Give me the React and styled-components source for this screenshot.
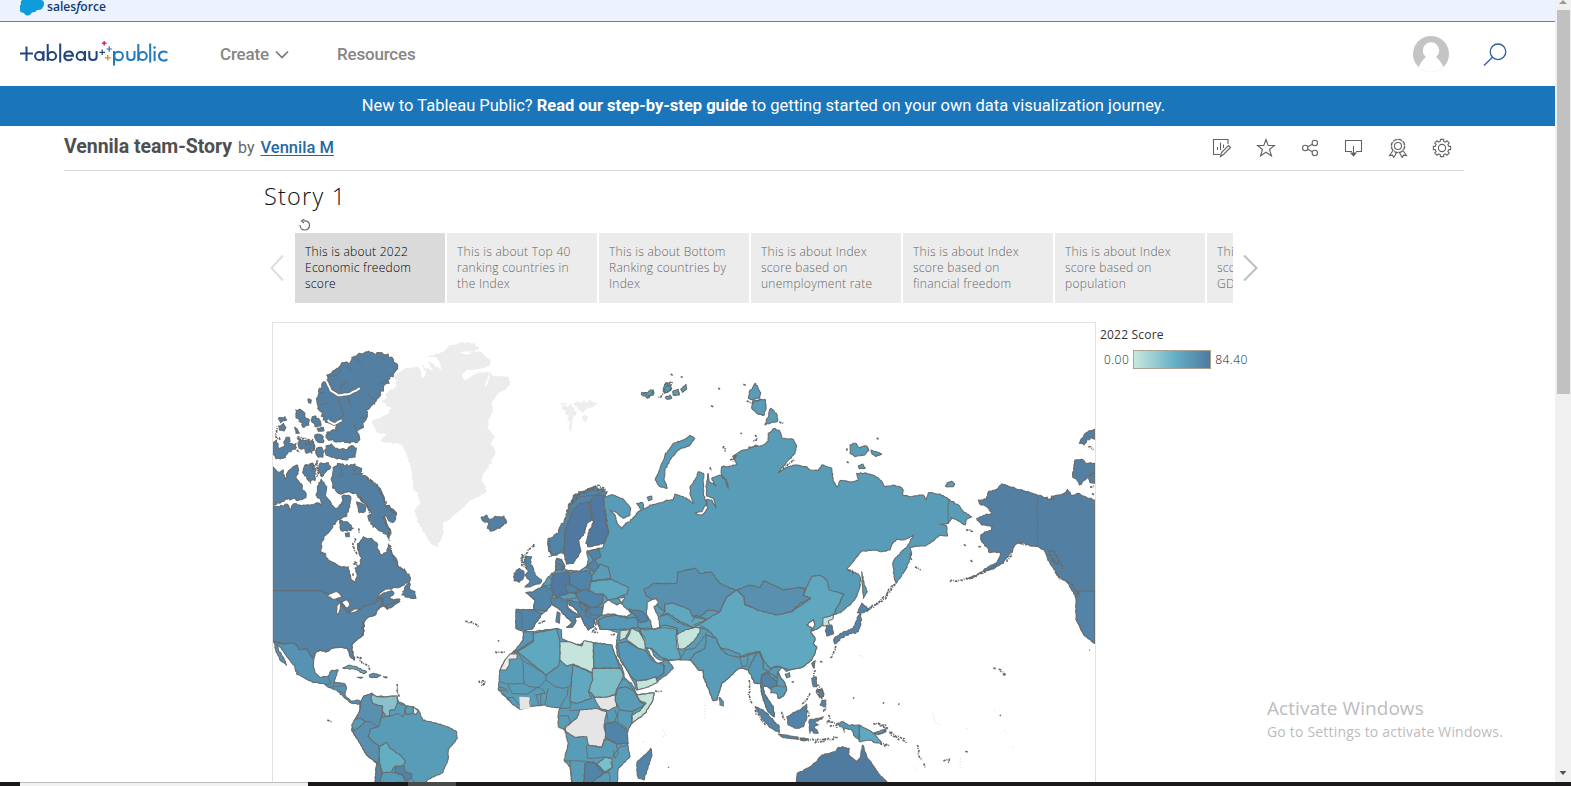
import React from "react";
import styled, { createGlobalStyle } from "styled-components";

const Global = createGlobalStyle`
  * { box-sizing: border-box; }
  html, body { margin: 0; padding: 0; overflow: hidden; background: #fff; }
  body { font-family: Roboto, "Liberation Sans", sans-serif; }
`;

const Screen = styled.div`
  width: 1571px;
  height: 786px;
  display: flex;
  flex-direction: column;
  position: relative;
  overflow: hidden;
`;
const Browser = styled.div`
  display: flex;
  height: 782px;
  flex: none;
`;
const Page = styled.main`
  width: 1555px;
  height: 782px;
  overflow: hidden;
  display: flex;
  flex-direction: column;
`;
const CompanyBar = styled.div`
  height: 22px;
  flex: none;
  background: #ecf3fe;
  border-bottom: 1px solid #2196d6;
  padding-left: 20px;
  svg { display: block; }
`;
const Header = styled.header`
  height: 64px;
  flex: none;
  display: flex;
  align-items: center;
  padding: 0 48px 0 20px;
`;
const NavLink = styled.a`
  display: flex;
  align-items: center;
  gap: 6px;
  margin-left: ${(p) => p.$gap}px;
  width: ${(p) => p.$width}px;
  font-size: 17px;
  font-weight: 500;
  letter-spacing: -0.2px;
  color: #868686;
  white-space: nowrap;
`;
const HeaderTools = styled.div`
  margin-left: auto;
  display: flex;
  align-items: center;
  gap: 34px;
`;
const Banner = styled.div`
  height: 40px;
  flex: none;
  background: #1b75bb;
  color: #fff;
  font-size: 16.5px;
  display: flex;
  justify-content: center;
  align-items: center;
  padding: 0 28px 2px 0;
  white-space: pre;
  b { font-weight: 700; }
`;
const TitleRow = styled.div`
  height: 45px;
  flex: none;
  margin: 0 91px 0 64px;
  border-bottom: 1px solid #d8d8d8;
  display: flex;
  align-items: center;
  padding-right: 12px;
`;
const Title = styled.h1`
  margin: 0 0 4px;
  font-size: 19.5px;
  font-weight: 700;
  letter-spacing: -0.05px;
  color: #4f4f4f;
  white-space: nowrap;
`;
const By = styled.span`
  margin: 0 0 2px 6px;
  font-size: 16px;
  color: #666;
`;
const Author = styled.a`
  margin: 0 0 2px 6px;
  font-size: 16.5px;
  font-weight: 500;
  color: #1f69a6;
  text-decoration: underline;
  text-decoration-thickness: 1px;
  text-underline-offset: 2px;
  white-space: nowrap;
`;
const Actions = styled.div`
  margin-left: auto;
  display: flex;
  gap: 24px;
  svg { display: block; }
`;
const Viz = styled.section`
  font-family: "Open Sans", "Noto Sans", sans-serif;
  margin-left: 264px;
  width: 1010px;
  flex: none;
`;
const StoryTitle = styled.h2`
  margin: 0;
  height: 48px;
  padding-top: 9px;
  font-size: 23.5px;
  line-height: 33px;
  font-weight: 300;
  letter-spacing: 1.2px;
  color: #111;
`;
const ResetRow = styled.div`
  height: 14px;
  padding-left: 34px;
  svg { display: block; }
`;
const Navigator = styled.div`
  display: flex;
  align-items: center;
  height: 70px;
`;
const ArrowSlot = styled.div`
  width: ${(p) => p.$width}px;
  padding-left: ${(p) => p.$inset}px;
  display: flex;
  flex: none;
`;
const Points = styled.div`
  width: 938px;
  display: flex;
  gap: 2px;
  overflow: hidden;
  flex: none;
`;
const Point = styled.div`
  width: 150px;
  height: 70px;
  flex: none;
  padding: 11px 0 0 10px;
  background: ${(p) => (p.$active ? "#dadada" : "#ececec")};
  color: ${(p) => (p.$active ? "#000" : "#666")};
  font-size: 12px;
  font-weight: 300;
  line-height: 16px;
  letter-spacing: 0.27px;
  white-space: pre;
`;
const Board = styled.div`
  display: flex;
  margin: 19px 0 0 8px;
`;
const MapFrame = styled.div`
  width: 824px;
  height: 470px;
  border: 1px solid #e2e2e2;
  flex: none;
  svg { display: block; }
`;
const Legend = styled.div`
  padding: 4px 0 0 4px;
  font-size: 12px;
  letter-spacing: 0.2px;
  color: #333;
`;
const LegendTitle = styled.div`
  line-height: 17px;
`;
const LegendScale = styled.div`
  display: flex;
  align-items: center;
  gap: 4px;
  margin: 6px 0 0 4px;
  color: #222;
  font-weight: 300;
  letter-spacing: 0.45px;
`;
const Ramp = styled.div`
  width: 78px;
  height: 19px;
  margin-top: 1px;
  border: 1px solid #aaa38f;
  background: linear-gradient(90deg, #c8e8df, #64aec6 55%, #5079a1);
`;
const Scrollbar = styled.div`
  width: 16px;
  background: #f0f0f0;
  display: flex;
  flex-direction: column;
  align-items: center;
  svg { display: block; }
`;
const Thumb = styled.div`
  width: 13px;
  height: 384px;
  margin: 6px 0 auto 1px;
  background: #c1c1c1;
`;
const Taskbar = styled.div`
  height: 4px;
  display: flex;
  background: #1b191a;
  padding-left: 20px;
`;
const TaskItem = styled.div`
  width: ${(p) => p.$width}px;
  margin-right: ${(p) => p.$after}px;
  background: ${(p) => p.$color};
  border-top: 1px solid ${(p) => p.$edge};
`;
const Watermark = styled.div`
  position: absolute;
  left: 1267px;
  top: 695px;
  font-family: "Open Sans", "Noto Sans", sans-serif;
  color: #bcbcbc;
  white-space: nowrap;
`;
const WatermarkTitle = styled.div`
  font-size: 19px;
  line-height: 27px;
  letter-spacing: 0.05px;
`;
const WatermarkText = styled.div`
  font-size: 14px;
  line-height: 20px;
  letter-spacing: 0.19px;
`;

/* ---------- map ---------- */

// Each sheet is drawn at three units per pixel from its own origin.
const SHEETS = {
  A: [260, 320],
  B: [260, 540],
  C: [480, 460],
  D: [640, 360],
  E: [640, 560],
  F: [860, 400],
};

const toPoints = (text) => {
  let sheet = SHEETS.A;
  const out = [];
  text.trim().split(/\s+/).forEach((tok) => {
    if (SHEETS[tok]) sheet = SHEETS[tok];
    else {
      const [x, y] = tok.split(",").map(Number);
      out.push([sheet[0] + x / 3, sheet[1] + y / 3]);
    }
  });
  return out;
};

const noise = (a, b) => {
  const v = Math.sin(a * 12.9898 + b * 78.233) * 43758.5453;
  return v - Math.floor(v) - 0.5;
};

const pathOf = (text, rough = 0, closed = true) => {
  const pts = toPoints(text);
  let d = "";
  const n = pts.length;
  for (let i = 0; i < n; i++) {
    const [x, y] = pts[i];
    d += `${i ? "L" : "M"}${x.toFixed(1)} ${y.toFixed(1)}`;
    if (!closed && i === n - 1) break;
    const [u, v] = pts[(i + 1) % n];
    const len = Math.hypot(u - x, v - y);
    if (rough && len < 60 && x > 274 && x < 1093) {
      const steps = Math.floor(len / 1.7);
      for (let k = 1; k < steps; k++) {
        const t = k / steps;
        const px = x + (u - x) * t;
        const py = y + (v - y) * t;
        d += `L${(px + noise(px, py) * rough).toFixed(1)} ${(py + noise(py, px) * rough).toFixed(1)}`;
      }
    }
  }
  return closed ? d + "Z" : d;
};

const CA = "#537fa3";
const US = "#5383a7";
const RU = "#599cb7";
const KZ = "#5990b0";
const CN = "#5fa8bf";
const MID = "#5698b7";
const EU = "#5085a9";
const MX = "#5592b3";
const DEEP = "#5079a1";
const PALE = "#c5e5dc";
const GRAY = "#e5e5e5";
const GL = "#ececec";

// [fill, outline, roughness, stroke]
const LAND = [
  // Arctic Canada
  [CA, "A 200,165 225,150 242,138 250,128 270,130 275,112 298,100 322,96 350,102 366,98 385,108 400,118 413,135 410,150 390,175 380,190 370,205 362,225 345,245 330,262 318,270 322,290 308,310 305,325 290,335 298,350 292,368 270,370 240,366 215,360 198,352 205,335 230,330 228,310 205,308 190,300 188,280 172,265 170,240 178,205 190,185 205,195", 3.2],
  [CA, "A 107,270 118,268 130,275 135,290 148,300 146,316 132,322 118,300 108,288", 2.4],
  [CA, "A 157,290 168,288 180,302 182,318 165,320 156,306", 2.4],
  [CA, "A 55,295 75,290 80,300 62,308", 2],
  [CA, "A 55,318 70,310 78,322 72,333 58,330", 2.4],
  [CA, "A 145,236 154,240 152,250 146,248", 1],
  [CA, "A 104,322 112,328 118,340 108,340", 1],
  [CA, "A 172,325 190,322 192,332 175,334", 1],
  [CA, "A 38,370 50,360 56,385 70,380 78,352 88,352 90,375 108,370 106,388 85,395 70,415 48,416 38,400", 2.6],
  [CA, "A 112,355 135,362 158,358 162,385 155,400 140,400 132,385 118,385", 3.6],
  [CA, "A 165,345 185,345 192,362 180,368 168,360", 2.4],
  [CA, "A 170,385 185,382 192,395 188,412 175,412 168,400", 2.4],
  [CA, "A 198,378 215,372 225,385 255,388 280,378 288,392 285,412 250,418 215,412 198,405", 2.4],
  [CA, "A 38,440 52,455 70,450 75,478 84,455 100,440 113,437 113,455 107,470 120,490 127,510 138,520 132,535 115,542 100,535 82,538 65,545 50,552 38,552", 2.8],
  [CA, "A 135,435 160,432 168,450 166,475 152,490 140,475 128,458", 3],
  [CA, "A 180,430 205,428 212,440 198,455 185,470 175,455", 2],
  [CA, "A 232,432 265,438 285,432 305,445 300,460 325,475 345,490 362,510 372,530 375,548 400,568 410,580 402,605 385,600 375,585 380,610 392,632 388,650 370,640 350,625 332,612 325,595 332,575 322,555 305,545 290,520 265,515 235,520 218,505 214,480 220,450", 3],
  [CA, "A 240,600 250,605 262,605 280,625 272,632 248,634 240,620", 2],
  [CA, "A 256,640 268,638 268,650 258,650", 1],
  [CA, "A 290,545 315,555 315,575 298,578", 1],
  // North American mainland
  [CA, "A 38,558 60,560 80,552 92,568 100,552 130,555 150,556 170,548 182,555 180,535 168,525 172,500 183,478 200,500 198,530 215,555 232,565 245,548 250,525 272,530 270,560 258,590 240,598 228,605 218,622 200,642 185,668 182,690 183,700 B 182,35 195,40 205,60 225,70 245,82 265,80 268,100 275,120 287,128 291,110 285,85 300,75 305,55 298,35 297,10 A 296,700 292,672 310,650 335,655 350,668 355,690 368,706 382,695 385,672 395,695 B 395,40 408,55 412,75 425,85 437,98 448,103 450,122 432,135 410,143 385,146 365,155 352,172 372,158 395,152 402,160 388,170 398,182 420,178 415,186 400,190 380,206 372,198 360,202 350,210 345,225 325,232 312,245 310,285 290,300 275,315 275,330 283,360 272,352 263,325 245,322 215,325 200,335 180,330 165,340 160,360 38,305", 2],
  [US, "B 38,152 180,152 195,160 220,165 262,215 300,206 320,196 346,190 350,176 362,172 368,192 355,205 345,225 325,232 312,245 310,285 290,300 275,315 275,330 283,360 272,352 263,325 245,322 215,325 200,335 180,330 165,340 161,357 148,340 138,326 120,330 105,312 90,310 68,310 38,302", 0.8],
  ["#fff", "B 200,168 215,160 232,155 248,172 232,175 220,178", 1],
  ["#fff", "B 232,195 242,185 240,210 235,225 229,218", 0.8],
  ["#fff", "B 245,185 262,178 270,195 262,205 252,195", 1],
  ["#fff", "B 262,220 285,206 305,206 285,216", 0.6],
  [CA, "B 425,165 440,135 450,130 450,148 465,155 468,175 448,172", 1.8],
  [CA, "B 378,195 395,190 412,183 420,185 400,198 382,208", 1.4],
  // Mexico, Central America and the Caribbean
  [MX, "B 42,305 68,312 90,310 105,312 120,330 138,326 148,340 161,357 160,380 165,398 180,412 205,408 213,392 235,390 230,405 222,428 252,430 259,440 255,465 275,485 290,480 303,485 298,492 275,490 250,470 230,450 205,442 190,430 160,428 110,402 105,382 85,355 62,322 50,312 55,330 72,355 80,376 62,362 48,335", 1],
  ["#62abc1", "B 248,384 265,376 290,380 320,396 312,401 285,388", 1],
  [MX, "B 328,405 340,400 362,406 350,413 330,412", 1],
  [EU, "B 292,412 308,412 303,415", 0],
  [EU, "B 370,410 382,411 378,414", 0],
  // South America
  [RU, "B 302,485 312,468 335,460 345,468 380,470 410,468 415,485 440,498 475,510 488,540 530,550 562,560 590,575 592,595 565,630 565,655 548,698 515,712 495,728 345,728 350,670 320,645 300,610 275,570 290,530 300,510", 1],
  [KZ, "B 302,485 312,468 335,460 338,490 370,498 365,530 355,560 330,568 325,590 345,610 355,615 360,645 352,670 320,645 300,610 275,570 290,530 300,510", 0.6],
  ["#89c2cb", "B 338,463 350,470 380,470 412,468 412,490 405,508 388,512 390,528 378,530 368,515 368,498 338,490 332,475", 0.8],
  [RU, "B 285,538 302,534 315,545 300,560 282,572 275,555", 0.5],
  ["#62afc2", "B 358,620 380,607 390,625 420,645 436,662 430,680 405,678 395,695 368,698 358,670", 0.6],
  [EU, "B 345,728 350,670 360,672 364,700 360,728", 0.5],
  [EU, "B 405,682 430,676 436,695 455,702 455,715 440,722 428,705 405,697", 0.6],
  [RU, "B 434,508 442,498 460,500 460,520 440,524", 0],
  [GRAY, "B 460,500 475,512 468,524 460,520", 0],
  // Greenland
  [GL, "A 575,75 600,68 640,70 655,80 652,90 620,95 665,95 690,120 690,135 665,145 620,150 605,165 615,180 645,160 690,155 700,170 720,168 745,170 750,190 740,205 715,220 695,250 700,275 685,300 685,325 705,350 690,370 708,395 695,425 675,455 665,480 680,510 675,520 625,545 600,570 570,598 548,610 550,640 530,682 512,670 495,640 475,610 463,570 480,545 470,520 458,500 455,455 440,400 425,375 390,368 360,362 380,345 350,335 335,305 380,285 395,265 365,245 380,235 375,220 410,200 405,165 435,145 475,138 490,175 500,155 485,135 520,155 505,125 545,150 530,110 500,110 540,100", 2, "none"],
  ["#fff", "A 607,170 640,152 672,150 640,165 615,180", 1, "none"],
  ["#fff", "A 672,205 692,152 684,190", 1, "none"],
  ["#fff", "A 597,98 618,94 640,101 615,103", 1, "none"],
  ["#fff", "A 455,515 475,518 472,524 458,524", 1, "none"],
  // Iceland
  [CA, "A 665,590 680,585 692,598 712,590 732,588 740,606 720,625 700,632 682,625 686,608 668,602", 2.6],
  // Eurasia
  [RU, "C 370,110 400,105 430,118 452,145 450,165 430,175 405,155 390,150 405,165 412,190 425,205 437,190 450,185 470,160 485,150 470,130 488,128 490,148 510,135 545,128 560,120 580,120 583,110 D 105,402 130,410 160,430 150,400 150,380 165,360 175,335 190,340 191,375 190,400 200,430 185,455 165,459 185,466 203,445 200,418 215,420 228,444 220,415 200,408 199,375 204,340 208,365 228,378 215,355 240,345 255,358 265,385 260,360 245,345 245,320 275,318 290,312 278,290 300,275 340,260 370,255 385,242 385,220 405,205 420,215 425,235 460,238 470,260 465,280 440,305 415,338 445,320 465,315 500,320 510,330 535,332 545,315 575,325 580,365 592,382 600,362 640,365 655,360 650,340 680,340 F 45,228 60,240 75,260 100,255 120,260 130,270 128,285 150,290 190,285 198,300 205,278 240,282 265,297 300,320 310,335 335,350 320,358 315,375 300,365 275,352 265,370 240,372 260,378 262,408 240,405 210,430 195,438 170,438 150,442 155,460 145,490 135,512 108,550 102,530 98,490 105,475 130,450 148,430 160,405 145,415 130,420 110,418 95,435 90,450 65,455 50,450 5,453 D 640,605 620,628 655,642 E 660,50 660,80 650,110 630,135 605,155 580,165 560,178 548,195 530,208 515,212 525,195 520,178 500,195 515,203 512,218 525,235 520,250 530,260 525,280 515,300 490,320 450,330 440,335 430,325 415,322 412,335 435,370 440,390 430,408 415,415 410,400 390,385 378,378 370,380 372,400 385,420 400,440 403,470 385,455 370,420 365,400 360,370 345,370 335,350 325,330 300,325 290,330 270,350 245,370 238,395 230,420 220,422 205,385 190,350 190,330 175,330 165,315 150,300 120,300 85,300 C 540,600 525,590 510,565 500,565 515,590 530,610 550,605 555,590 580,625 560,645 530,665 470,690 460,665 440,630 415,590 408,560 415,520 405,515 380,508 360,508 355,495 345,475 340,500 325,510 310,485 300,465 280,440 260,430 265,445 300,470 285,472 288,482 278,500 260,502 278,488 255,465 235,445 215,432 200,452 185,462 170,485 155,508 125,512 108,505 110,450 160,450 165,420 138,398 165,395 185,380 205,350 225,335 230,295 245,300 255,330 300,333 320,320 325,300 320,275 345,268 370,262 384,222 378,170", 1.1],
  [EU, "C 205,235 230,220 250,190 265,140 285,105 320,90 350,80 382,95 370,120 378,170 385,220 370,250 330,260 318,250 325,220 342,185 330,178 320,190 310,225 295,240 302,275 280,310 260,312 250,280 240,278 215,287 205,265", 2.4],
  [DEEP, "C 252,280 255,210 280,150 300,130 330,125 335,180 320,190 310,225 295,240 302,275 280,310 260,312", 0.4],
  [DEEP, "C 330,125 345,105 370,105 372,140 378,180 385,220 370,250 330,260 318,250 325,220 342,185 335,160", 0.6],
  [EU, "C 228,300 245,298 255,320 245,332 228,332", 2],
  [DEEP, "C 218,342 265,335 272,372 258,382 265,400 228,412 212,385 215,360", 0.8],
  [EU, "C 270,338 330,332 335,352 330,385 300,392 268,370", 0.8],
  [EU, "C 160,395 190,378 215,388 218,405 215,432 200,452 160,450 165,420 138,398", 1],
  [EU, "C 108,448 160,450 185,462 170,485 155,508 125,512 108,505", 1],
  [EU, "C 212,415 240,412 262,425 262,445 300,470 285,472 288,482 278,500 260,502 278,488 255,465 235,445 215,432", 1],
  [EU, "C 255,375 275,375 295,388 285,400 262,395", 0.5],
  [EU, "C 285,400 315,388 350,402 370,405 365,432 340,445 320,435 300,425", 0.8],
  [EU, "C 262,420 285,425 310,430 330,445 370,440 365,465 345,475 340,500 325,510 310,485 300,465 280,440", 1.5],
  [EU, "C 322,272 358,268 362,290 345,300 355,315 345,335 318,320 340,300", 1.2],
  ["#5b9db9", "C 335,348 360,312 385,322 392,355 335,362", 0.8],
  [CN, "C 332,365 392,358 410,365 445,382 442,400 410,415 385,420 370,402 350,402 328,392", 0.8],
  ["#fff", "C 365,465 372,430 385,420 410,435 425,428 412,415 435,412 425,432 455,460 440,470 395,462", 1],
  [MID, "C 355,480 375,470 410,466 440,474 472,472 475,502 440,508 405,508 380,508 360,508", 1],
  [EU, "C 445,448 490,455 505,480 480,488 470,470", 1.2],
  [KZ, "E 12,90 40,70 110,70 112,38 165,25 180,40 212,35 240,70 288,92 260,112 240,155 205,150 175,172 150,165 100,130 75,132 75,155 55,140 45,120 20,110", 1.2],
  [CN, "E 75,155 75,132 100,130 150,150 158,170 200,178 165,205 120,185 85,160 60,170", 0.8],
  [CN, "E 0,205 35,205 75,195 112,205 115,265 122,298 85,300 60,290 35,265 15,262", 0.7],
  ["#fff", "E 20,125 50,115 55,130 42,140 55,170 60,205 38,208 30,180 20,165", 1.2],
  [PALE, "E 108,225 135,210 160,203 180,195 180,215 160,245 135,265 112,268", 0.8],
  [CN, "E 165,200 240,155 260,112 290,90 312,110 315,135 410,162 455,155 512,115 490,105 500,80 515,50 540,45 560,60 568,90 612,102 592,140 585,160 560,178 548,195 530,208 515,212 525,195 520,178 500,195 515,203 512,218 525,235 520,250 530,260 525,280 515,300 490,320 450,330 410,318 390,325 370,300 360,275 325,280 300,290 240,262 228,235 205,210", 0.8],
  [KZ, "E 290,90 330,75 360,82 370,62 400,75 430,90 475,82 495,85 490,105 512,115 480,130 455,155 410,165 350,150 315,132 312,110", 0.9],
  [RU, "E 150,300 165,280 195,265 200,225 228,235 240,262 300,292 360,275 345,300 325,330 300,325 290,330 270,350 245,370 238,395 230,420 220,422 205,385 190,350 190,330 175,330 165,315", 0.9],
  [RU, "E 240,265 265,268 300,282 300,292 265,285", 0.6],
  [MID, "E 325,330 335,305 355,275 368,300 370,325 385,335 365,345 362,370 345,370 335,350", 0.8],
  [EU, "E 365,345 385,340 395,355 412,365 410,378 392,385 378,378 370,380 372,400 385,420 400,440 403,470 385,455 370,420 365,400", 1],
  [RU, "E 385,335 400,322 425,322 412,340 435,370 440,390 430,408 415,415 410,400 392,398 395,382 412,378 412,355", 0.8],
  [PALE, "E 548,175 580,165 580,175 565,185 570,195 550,198", 0.8],
  [DEEP, "E 560,198 575,195 580,222 560,228 556,212", 0.8],
  // Japan, Taiwan, Sakhalin
  [EU, "E 660,155 665,180 655,215 620,225 600,235 585,252 583,235 610,215 640,205 652,180", 2],
  [EU, "E 665,130 690,148 672,158 652,158", 1.2],
  [RU, "E 665,35 672,70 682,95 670,115 668,80", 1],
  [EU, "E 515,310 526,302 522,325", 0.8],
  [RU, "E 436,343 448,338 450,350 440,353", 0.5],
  // South-east Asia
  [EU, "E 345,440 370,450 400,480 418,500 418,518 395,505 370,480", 1.2],
  [EU, "E 440,470 455,462 480,450 500,432 500,475 490,500 465,505 445,495", 1.2],
  [EU, "E 415,522 440,525 475,532 470,537 430,533", 0.8],
  [EU, "E 480,534 505,536 500,541 482,540", 1.5],
  [EU, "E 508,480 530,475 550,470 545,478 522,485 535,495 522,500 535,520 522,520 515,505 510,520 508,500", 1.3],
  [EU, "E 515,355 528,350 530,380 520,380", 1.4],
  [EU, "E 545,422 558,420 555,440 540,435", 1.4],
  [EU, "E 530,390 545,385 550,410 538,412", 2.5],
  [MID, "E 590,490 610,485 625,495 658,495 658,540 645,530 635,510 615,505 600,500", 1.2],
  [CN, "E 658,495 695,515 710,530 725,550 705,548 690,540 658,545", 1],
  [MID, "E 700,520 735,508 738,515 715,524", 0.8],
  [RU, "E 238,412 250,425 250,438 240,435", 0.8],
  // Australia
  ["#507ba0", "E 468,668 472,640 510,620 530,605 545,585 585,575 595,562 628,565 625,585 650,605 662,590 668,555 680,590 695,610 715,640 742,668", 1],
  // Arabia
  [PALE, "C 420,512 450,508 435,535 418,542", 0.5],
  [PALE, "C 440,538 455,505 478,515 495,545 495,572 475,565 455,550", 0.6],
  [MID, "C 412,550 440,545 475,565 498,572 515,600 535,610 550,612 552,640 530,655 470,662 458,655 440,630 420,595", 0.6],
  [PALE, "C 468,662 500,660 528,650 532,668 500,682 472,690", 0.8],
  // Africa
  [RU, "C 130,515 160,515 230,505 245,510 245,535 265,545 300,555 315,545 340,548 395,555 405,585 425,620 435,655 455,670 470,705 522,698 518,722 495,760 455,790 440,820 445,870 450,890 415,925 412,968 275,968 270,920 252,900 265,850 255,812 235,800 235,765 240,745 210,740 190,735 150,740 120,748 95,730 70,705 55,690 60,630 75,600 110,575 130,540", 0.9],
  [MID, "C 130,515 160,515 160,540 115,570 92,582 110,565 130,540", 0.5],
  [CN, "C 160,520 230,506 240,545 240,600 235,618 198,645 112,575 160,545", 0.5],
  [PALE, "C 240,545 265,545 305,558 312,542 340,548 342,640 280,612 260,618 240,600", 0.6],
  [RU, "C 340,548 395,555 405,585 420,625 342,625", 0.6],
  ["#7dbdc8", "C 338,625 422,625 430,650 415,680 405,705 375,712 345,712 325,690 335,660", 0.7],
  [GRAY, "C 340,712 375,712 405,705 410,740 385,752 360,745", 0.6],
  [GRAY, "C 300,750 345,745 380,755 372,800 378,825 365,862 325,855 320,830 285,832 258,815 255,800 290,775", 0.7],
  [GL, "C 60,630 75,600 90,582 112,581 111,596 88,598 88,615 78,630", 0],
  [GRAY, "C 118,710 150,712 152,745 120,748", 0, "none"],
  [CN, "C 275,645 280,615 335,638 338,660 325,695 335,715 290,730 270,725", 0.6],
  [EU, "C 375,790 405,785 440,810 445,850 410,852 378,835", 0.6],
  [RU, "C 412,685 435,680 460,690 480,725 495,735 455,755 420,750 405,720", 0.6],
  [PALE, "C 470,705 522,698 518,722 495,760 455,790 455,765 480,752 498,730 478,720", 0.6],
  ["#78bfca", "C 350,912 375,892 395,895 398,920 375,935", 0.6],
  [EU, "C 315,910 340,905 372,940 350,955 335,968 312,968", 0.6],
  [EU, "C 472,905 500,880 512,865 516,885 492,960 475,955 470,930", 1],
  // Britain, Ireland, Sardinia
  [EU, "C 135,290 155,290 150,310 160,325 165,345 185,360 178,372 155,378 135,382 150,365 135,345 145,335 135,315", 1.6],
  [DEEP, "C 102,340 118,325 132,335 130,355 118,367 102,362", 1.5],
  [EU, "C 232,455 240,460 238,490 228,485", 0.6],
  // Russian Arctic
  [RU, "D 46,360 60,325 75,285 100,250 130,240 150,226 164,235 150,255 115,270 90,300 75,330 72,360 82,385 60,380", 1.2],
  [RU, "D 328,95 347,70 362,98 360,115 340,118 325,115", 1.6],
  [RU, "D 338,122 375,118 378,140 372,166 350,160 335,145", 1.6],
  [RU, "D 375,195 392,145 412,165 412,185 392,188", 1.2],
  [RU, "D 630,255 648,250 655,262 680,258 686,272 672,286 645,290 630,280", 1.6],
  [RU, "D 693,270 725,283 708,290 697,283", 1],
  [RU, "D 655,318 668,312 676,325 658,326", 1],
  [RU, "D 22,412 35,408 36,418 26,422", 0.6],
  [RU, "D 98,95 115,88 118,105 100,106", 1],
  [RU, "D 122,88 138,73 140,88 128,97", 1],
  [RU, "D 70,85 80,68 88,70 95,85 80,98 70,95", 2.6],
  [RU, "D 5,97 18,98 30,90 40,90 42,100 22,115 10,108", 2.6],
  [RU, "D 76,112 90,105 95,115 80,118", 1.6],
  [RU, "F 256,258 262,248 275,244 284,252 280,260 262,261", 0.6],
  // Alaska and the Pacific coast
  [CA, "F 355,300 378,298 385,275 410,268 425,252 450,260 465,265 500,275 532,285 545,288 568,300 575,288 600,285 615,278 622,268 635,288 655,280 670,288 704,300 704,730 690,718 672,705 660,680 648,658 650,600 640,575 620,545 595,530 570,490 555,455 535,440 510,438 490,428 468,432 450,460 430,490 395,508 365,515 345,530 320,538 350,525 380,505 410,488 422,460 405,455 390,458 380,440 365,425 362,405 375,395 395,390 398,378 365,375 350,355 375,345 398,340 380,320 358,310", 1.4],
  [US, "F 704,573 655,573 648,600 648,658 660,680 672,705 704,730", 0.8],
  [CA, "F 658,130 672,105 690,92 704,88 704,118 690,112 672,135", 2],
  [CA, "F 645,180 665,178 675,188 704,190 704,215 685,230 675,240 658,255 650,238 638,232", 1.6],
  [CA, "F 685,235 704,215 704,250 690,248", 1],
];

const BORDERS = [
  "F 532,285 532,438", "F 265,297 265,372", "E 658,495 658,540",
  "C 252,902 300,903 325,905 350,912", "C 270,903 275,968", "C 312,968 315,910", "C 320,855 322,895 350,895 370,890 395,895 420,860 445,855",
  "C 325,855 365,862 372,842 385,838 405,850", "C 378,940 398,920 390,905", "C 350,955 372,940 388,935 390,968",
  "C 128,600 132,670 80,672 60,665", "C 132,670 150,680 175,682 198,660 198,645", "C 130,602 200,645", "C 112,575 128,600",
  "C 198,660 225,680 250,685 275,678 275,645", "C 205,685 195,735", "C 265,685 262,705 240,745", "C 275,725 270,745 240,745", "C 85,675 95,700 140,703 160,690 175,682 190,690 195,700 165,705",
  "C 150,712 150,740", "C 170,705 175,738", "C 182,700 182,735", "C 70,700 80,712 100,712 118,735", "C 55,680 80,688 85,700", "C 60,690 78,692", "C 80,712 95,728",
  "C 235,768 265,768 272,790 250,808", "C 268,752 300,750", "C 380,758 385,790 405,785 410,765 405,750", "C 415,752 412,785 440,805", "C 458,755 455,790", "C 425,658 440,660 465,698 475,705",
  "C 408,850 415,880 405,895 400,870", "C 125,460 127,505", "C 110,455 125,460",
  "C 190,378 212,375 216,360 205,350", "C 218,405 235,412", "C 300,430 305,450 320,450 318,470 335,475", "C 325,445 330,465 368,465", "C 262,400 290,400 288,415 255,418",
  "C 205,290 240,278 252,265 255,210", "C 265,165 275,130 300,110 345,105 370,95",
  "C 475,502 500,510 540,502 590,508 592,540 595,568", "C 475,502 482,520 498,535", "C 530,655 550,640 555,615",
  "E 112,205 108,225", "E 122,298 135,270 165,265 185,240 205,210 180,195", "E 75,160 110,185 160,205", "E 155,185 170,165 200,180 160,195",
  "E 300,292 305,320 320,318 325,285", "E 585,160 592,140 612,102", "E 475,82 495,85", "E 395,355 412,352 412,335", "E 412,378 435,380",
  "B 355,560 330,545 315,545", "B 412,490 440,498 430,530 415,520 390,528", "B 365,530 390,528", "B 455,715 465,728", "B 368,698 362,715", "B 395,695 430,708 435,728",
  "B 205,408 212,430 195,435", "B 222,430 222,440 205,442", "B 225,440 255,435", "B 240,452 255,465", "B 303,485 300,510", "B 345,190 368,172 370,195",
  "A 232,230 245,265 252,285 235,300", "A 250,190 235,205", "A 262,230 272,255", "A 205,170 230,165 245,150", "A 290,115 305,130", "A 260,140 280,155", "A 360,110 375,120", "A 388,178 355,192", "A 345,240 325,225", "A 320,290 298,295", "A 175,215 195,220", "A 180,255 200,250", "A 285,330 285,310",
  "A 240,440 248,465 232,470", "A 290,438 280,465 310,460", "A 205,208 225,212", "A 240,208 250,190 262,185", "A 85,555 92,580", "A 275,440 285,455",
];

// Sounds that cut into the Arctic islands
const SOUNDS = ["A 200,185 212,212 235,226 270,221 300,205", "A 203,300 222,312 245,300"];

// Runs of small islets: fragments of dotted coastline
const ISLETS = [
  "A 150,430 158,450 172,420 172,470", "A 200,335 215,345", "A 112,350 160,365 162,395", "A 60,360 48,350 50,320", "A 320,475 345,490 370,530 378,560 408,580", "A 300,530 325,560 330,590", "A 110,390 118,398", "A 135,375 150,370 148,395",
  "A 370,590 388,630 388,665", "A 285,655 280,685", "A 296,625 294,640", "B 282,20 290,45", "B 283,65 290,75 283,72 292,68", "B 280,100 278,110", "B 388,15 395,40 412,75 440,98", "B 312,245 305,260 310,285",
  "B 290,350 305,352 300,365 320,375 330,390", "B 412,432 410,455 418,470", "B 202,540 215,545", "B 616,244 642,252 658,262", "B 706,335 738,338", "B 713,302 718,303", "B 656,422 672,432 662,435", "B 822,12 808,30 790,45 785,75 800,85", "B 785,42 795,60 790,70 800,50",
  "C 265,135 285,105 325,88 350,76 380,92", "C 275,130 300,102 340,90 375,90", "C 208,240 208,270 222,285", "C 340,478 350,490 342,500 352,508 335,515 355,518", "C 128,290 125,305 132,318", "C 160,255 162,262", "C 175,490 198,482", "C 405,522 392,524", "C 525,692 545,693", "C 5,662 16,668 8,676", "C 235,310 250,320 245,330", "C 300,425 320,440 315,460",
  "D 75,75 95,65 90,90 65,105 55,112", "D 70,92 78,80 92,78", "D 10,100 30,108 42,94", "D 92,42 98,46", "D 122,50 128,52", "D 310,73 318,76", "D 235,84 240,88", "D 213,137 220,140", "D 302,218 305,222", "D 345,225 352,240 340,245", "D 252,258 255,275", "D 270,300 290,285 280,305", "D 325,262 355,255", "D 418,185 430,190", "D 620,265 622,275", "D 712,236 716,237", "D 620,305 626,308", "D 430,328 445,312 462,298", "D 210,322 215,332", "D 320,125 335,130 360,118", "D 625,630 640,632 636,645",
  "E 765,72 750,95 730,118 710,132 690,146", "E 588,258 580,280 568,295", "E 540,305 550,308", "E 328,360 326,400 338,432", "E 345,450 365,480 378,498", "E 510,400 495,425 485,435", "E 530,375 550,400 545,415 530,400 540,390", "E 565,465 570,485 560,490", "E 470,538 520,540 560,540 595,532", "E 525,550 545,545 558,535", "E 570,500 590,495 590,505", "E 560,485 585,490", "E 700,490 730,495 745,505 735,515", "E 750,515 765,530 778,540", "E 610,505 612,520", "E 455,365 462,366", "E 525,330 520,350", "E 640,412 642,416", "E 85,620 86,623", "E 775,432 778,433", "E 735,555 750,558", "E 605,560 612,562", "E 500,450 508,470", "E 425,455 435,480", "E 550,455 558,440",
  "F 20,630 45,615 75,590 92,565 105,550", "F 270,545 300,540 325,537 350,525 380,512 405,495", "F 318,390 342,395", "F 312,433 317,438", "F 332,480 337,486", "F 165,500 182,510", "F 150,460 155,480", "F 355,440 365,440", "F 440,485 450,470 455,450", "F 480,430 500,435", "F 565,455 580,450 590,470 605,495 608,510", "F 585,515 600,540", "F 620,545 640,560 655,575 660,590", "F 565,465 595,495 575,480", "F 400,804 408,806", "F 416,808 430,816", "F 55,970 78,985 70,998 45,1000", "F 92,995 108,1010 125,1015 140,1030", "F 60,1030 82,1035", "F 172,1035 178,1070 185,1080", "F 192,1090 196,1102", "F 250,1082 268,1078 262,1088", "F 316,1054 323,1056", "F 115,912 118,913", "F 68,908 73,910", "F 420,945 422,948", "F 685,140 700,150", "F 690,260 702,258", "F 696,280 703,285", "F 688,750 690,751", "F 50,114 54,116", "F 560,290 572,298 585,290",
];

const FAINT = ["F 218,938 225,965 243,975", "F 320,985 325,990", "F 402,930 408,934", "F 432,990 438,1000", "F 458,1040 462,1041", "F 302,1075 300,1108", "F 162,1100 175,1110", "E 195,435 195,480", "E 70,510 80,530", "E 10,545 12,546", "E 125,618 126,619", "E 660,285 662,290", "F 5,768 8,770", "C 488,845 492,848", "C 550,830 553,828"];

const SVALBARD = [
  "M562 406l4-1 1 2 3-2 1-2 1 4 3 1-1 3 3 0-1 4-3 2-1 8-1 7-2-3 1-7-3-3 2-3-4-2 1-3-4-2z",
  "M573 404l4-3 4 2 3-3 3 3 3-4 2 3 6 1-5 4-7 2-3 4-4-3-2-3z",
  "M582 416l3-1 3 2-2 5-3-1z",
  "M561 403l6 0 0 1-6 1z",
];

const WorldMap = () => (
  <svg width="822" height="468" viewBox="273 323 822 468">
    {LAND.map(([fill, text, rough, stroke], i) => (
      <path key={i} d={pathOf(text, rough)} fill={fill} stroke={stroke || "#676b6c"} strokeWidth={1.1} strokeLinejoin="round" />
    ))}
    {SVALBARD.map((d) => <path key={d} d={d} fill="#ededed" />)}
    <g fill="none" stroke="#676b6c" strokeWidth="0.95">
      {BORDERS.map((t) => <path key={t} d={pathOf(t, 0.8, false)} />)}
    </g>
    <g fill="none" strokeLinejoin="round">
      {SOUNDS.map((t) => (
        <g key={t}>
          <path d={pathOf(t, 1.2, false)} stroke="#676b6c" strokeWidth="3.6" />
          <path d={pathOf(t, 0.8, false)} stroke="#fff" strokeWidth="2" />
        </g>
      ))}
    </g>
    <g fill="none" stroke="#646868" strokeWidth="1.6" strokeDasharray="2.5 1 1 1.2">
      {ISLETS.map((t) => <path key={t} d={pathOf(t, 2.4, false)} />)}
    </g>
    <g fill="none" stroke="#c4c4c4" strokeWidth="0.7" strokeDasharray="1 2">
      {FAINT.map((t) => <path key={t} d={pathOf(t, 1, false)} />)}
    </g>
    <circle cx="1004.3" cy="674.3" r="1.5" fill="#537485" />
  </svg>
);

/* ---------- logos and icons ---------- */

const SalesforceLogo = () => (
  <svg width="90" height="21" viewBox="0 0 90 21">
    <path d="M1 4C0 1 2-3 6-3c2-3 6-2 7 0 4-2 7 0 8 2 3 0 4 4 2 7-1 3-4 3-6 3-1 2-4 3-5 2-1 4-6 5-8 1-2 0-5-1-4-4-2-1-1-4 1-4z" transform="translate(0 1)" fill="#0d9dda" />
    <text x="27" y="10.5" fontFamily="Open Sans, sans-serif" fontSize="12.2" fontWeight="600" fill="#123a73" textLength="59" lengthAdjust="spacingAndGlyphs">sales<tspan fontStyle="italic">f</tspan>orce</text>
  </svg>
);

const TableauLogo = () => (
  <svg width="150" height="30" viewBox="0 0 150 30">
    <g fill="none" strokeWidth="2">
      <g stroke="#1f447e">
        <path d="M0 14.5H13M6.5 7.5V22" />
        <circle cx="19.2" cy="17" r="4.100" /><path d="M23.500 12V22" />
        <path d="M27.700 5V22" /><circle cx="32" cy="17" r="4.100" />
        <path d="M40.200 4.500V23.500" />
        <path d="M44.300 16.700H53C52.500 10.800 44.500 11 44.300 17c0 4.700 5.600 5.500 8 2.600" />
        <circle cx="60.700" cy="17" r="4.100" /><path d="M65 12V22" />
        <path d="M69.300 12V18c0 4 7.300 4 7.300 0V12" />
      </g>
      <g stroke="#2079bd">
        <path d="M94 12V26.500" /><circle cx="98.600" cy="17" r="4.300" />
        <path d="M107.300 12V18c0 4 7.200 4 7.200 0V12" />
        <path d="M118.300 5V22" /><circle cx="122.700" cy="17" r="4.100" />
        <path d="M130.200 4.500V23.500M134.600 12V22" />
        <path d="M147.300 13.700c-3-2.600-8.300-1-8.300 3.300s5.300 6 8.300 3.300" />
      </g>
      <circle cx="134.600" cy="8.500" r="1.200" fill="#2079bd" />
      <path d="M79.500 13.300h5.500M82.200 10.500v5.500" stroke="#1f447e" strokeWidth="1.200" />
      <path d="M82 4.300h4.500M84.200 2v4.500" stroke="#d62f4e" strokeWidth="1.500" />
      <path d="M86.500 10h5.500M89.200 7.200v5.500" stroke="#2079bd" strokeWidth="1.200" />
      <path d="M85 18.800h5.500M87.700 16v5.500" stroke="#ee8a45" strokeWidth="1.500" />
    </g>
  </svg>
);

const Avatar = () => (
  <svg width="36" height="36" viewBox="0 0 36 36">
    <defs><clipPath id="face"><circle cx="18" cy="18" r="18" /></clipPath></defs>
    <g clipPath="url(#face)">
      <rect width="36" height="36" fill="#c4c4c4" />
      <circle cx="18" cy="14.500" r="8.200" fill="#fff" />
      <path d="M4 35C7 27 11 22 13.500 21h9C26 23 29 27 32 35v2H4z" fill="#fff" />
    </g>
  </svg>
);

const Search = () => (
  <svg width="24" height="24" viewBox="0 0 24 24" fill="none" stroke="#2b5ba6" strokeWidth="1.300">
    <circle cx="15" cy="9.800" r="7.800" /><path d="M9.500 15.300L1 23.500" />
  </svg>
);

const Icon = ({ children }) => (
  <svg width="20" height="20" viewBox="0 0 20 20" fill="none" stroke="#636363" strokeWidth="1.100">{children}</svg>
);

const gearPath = (() => {
  const pts = [];
  for (let i = 0; i < 8; i++) {
    [[-0.24, 6.9], [-0.19, 8.8], [0.19, 8.8], [0.24, 6.9]].forEach(([a, r]) => {
      const t = (i * Math.PI) / 4 + a;
      pts.push(`${(10 + r * Math.sin(t)).toFixed(2)} ${(10 - r * Math.cos(t)).toFixed(2)}`);
    });
  }
  return `M${pts.join("L")}Z`;
})();

const Toolbar = () => (
  <Actions>
    <Icon><path d="M8 16.500H1.500V1.500H16V6M5.500 12V9M8.500 12V4.500M11.500 10V6.500" /><path d="M8.500 18.500l1-4 7-7 2 2-7 7zM9 17.500l-1 1" /></Icon>
    <Icon><path d="M10 1.500l2.200 6h6.300l-5 4 2 6.500L10 14.200 4.500 18l2-6.500-5-4h6.300z" /></Icon>
    <Icon><circle cx="5.200" cy="10" r="2.700" /><circle cx="14.800" cy="5" r="2.700" /><circle cx="14.800" cy="15" r="2.700" /><path d="M7.600 8.800l4.900-2.600M7.600 11.200l4.900 2.600" /></Icon>
    <Icon><path d="M8 13.500H1.500V2.500h16v11H12M9.500 8v9" /><path d="M7 15h5l-2.500 3z" fill="#555" /></Icon>
    <Icon><circle cx="10" cy="8" r="3.500" /><circle cx="10" cy="8" r="6.800" strokeDasharray="4 1.340" /><circle cx="10" cy="8" r="6.400" strokeWidth=".7" /><path d="M5 12.500l-3.500 5 3-.3 1.200 2.300 3-5M15 12.500l3.500 5-3-.3-1.200 2.300-3-5" /></Icon>
    <Icon><path d={gearPath} strokeLinejoin="round" /><circle cx="10" cy="10" r="3.600" /></Icon>
  </Actions>
);

const POINTS = [
  "This is about 2022\nEconomic freedom\nscore",
  "This is about Top 40\nranking countries in\nthe Index",
  "This is about Bottom\nRanking countries by\nIndex",
  "This is about Index\nscore based on\nunemployment rate",
  "This is about Index\nscore based on\nfinancial freedom",
  "This is about Index\nscore based on\npopulation",
  "This is about Index\nscore based on\nGDP",
];

export default function App() {
  return (
    <Screen>
      <Global />
      <Browser>
        <Page>
          <CompanyBar><SalesforceLogo /></CompanyBar>
          <Header>
            <TableauLogo />
            <NavLink $gap={50} $width={69}>
              Create
              <svg width="14" height="9" viewBox="0 0 14 9" fill="none" stroke="#777" strokeWidth="1.700"><path d="M1 1.500l6 6 6-6" /></svg>
            </NavLink>
            <NavLink $gap={48} $width={90}>Resources</NavLink>
            <HeaderTools><Avatar /><Search /></HeaderTools>
          </Header>
          <Banner>New to Tableau Public? <b>Read our step-by-step guide</b> to getting started on your own data visualization journey.</Banner>
          <TitleRow>
            <Title>Vennila team-Story</Title>
            <By>by</By>
            <Author>Vennila M</Author>
            <Toolbar />
          </TitleRow>
          <Viz>
            <StoryTitle>Story 1</StoryTitle>
            <ResetRow>
              <svg width="14" height="13" viewBox="0 0 14 13" fill="none" stroke="#666" strokeWidth="1.200"><path d="M5.500 2c4-.8 6.200 1.600 6 4.300-.2 2.800-2.400 4.700-5 4.700C4 11 2 9 2 6.300" /><path d="M6.300 0L3.500 2 6 4" /></svg>
            </ResetRow>
            <Navigator>
              <ArrowSlot $width={31} $inset={6}>
                <svg width="14" height="28" viewBox="0 0 14 28" fill="none" stroke="#dedede" strokeWidth="2"><path d="M13 1.500L1.500 14 13 26.500" /></svg>
              </ArrowSlot>
              <Points>
                {POINTS.map((text, i) => <Point key={i} $active={i === 0}>{text}</Point>)}
              </Points>
              <ArrowSlot $width={36} $inset={10}>
                <svg width="15" height="28" viewBox="0 0 15 28" fill="none" stroke="#bebebe" strokeWidth="2"><path d="M1 1.500L13.500 14 1 26.500" /></svg>
              </ArrowSlot>
            </Navigator>
            <Board>
              <MapFrame><WorldMap /></MapFrame>
              <Legend>
                <LegendTitle>2022 Score</LegendTitle>
                <LegendScale><span>0.00</span><Ramp /><span>84.40</span></LegendScale>
              </Legend>
            </Board>
          </Viz>
        </Page>
        <Scrollbar>
          <svg width="8" height="4" viewBox="0 0 8 4"><path d="M0 4L4 0l4 4z" fill="#999" /></svg>
          <Thumb />
          <svg width="8" height="11" viewBox="0 0 8 11"><path d="M0.500 0h7L4 4z" fill="#505050" /></svg>
        </Scrollbar>
      </Browser>
      <Taskbar>
        <TaskItem $width={288} $after={100} $color="#f2f2f2" $edge="#bdbdbd" />
        <TaskItem $width={48} $after={0} $color="#4b4a4b" $edge="#4b4a4b" />
      </Taskbar>
      <Watermark>
        <WatermarkTitle>Activate Windows</WatermarkTitle>
        <WatermarkText>Go to Settings to activate Windows.</WatermarkText>
      </Watermark>
    </Screen>
  );
}
